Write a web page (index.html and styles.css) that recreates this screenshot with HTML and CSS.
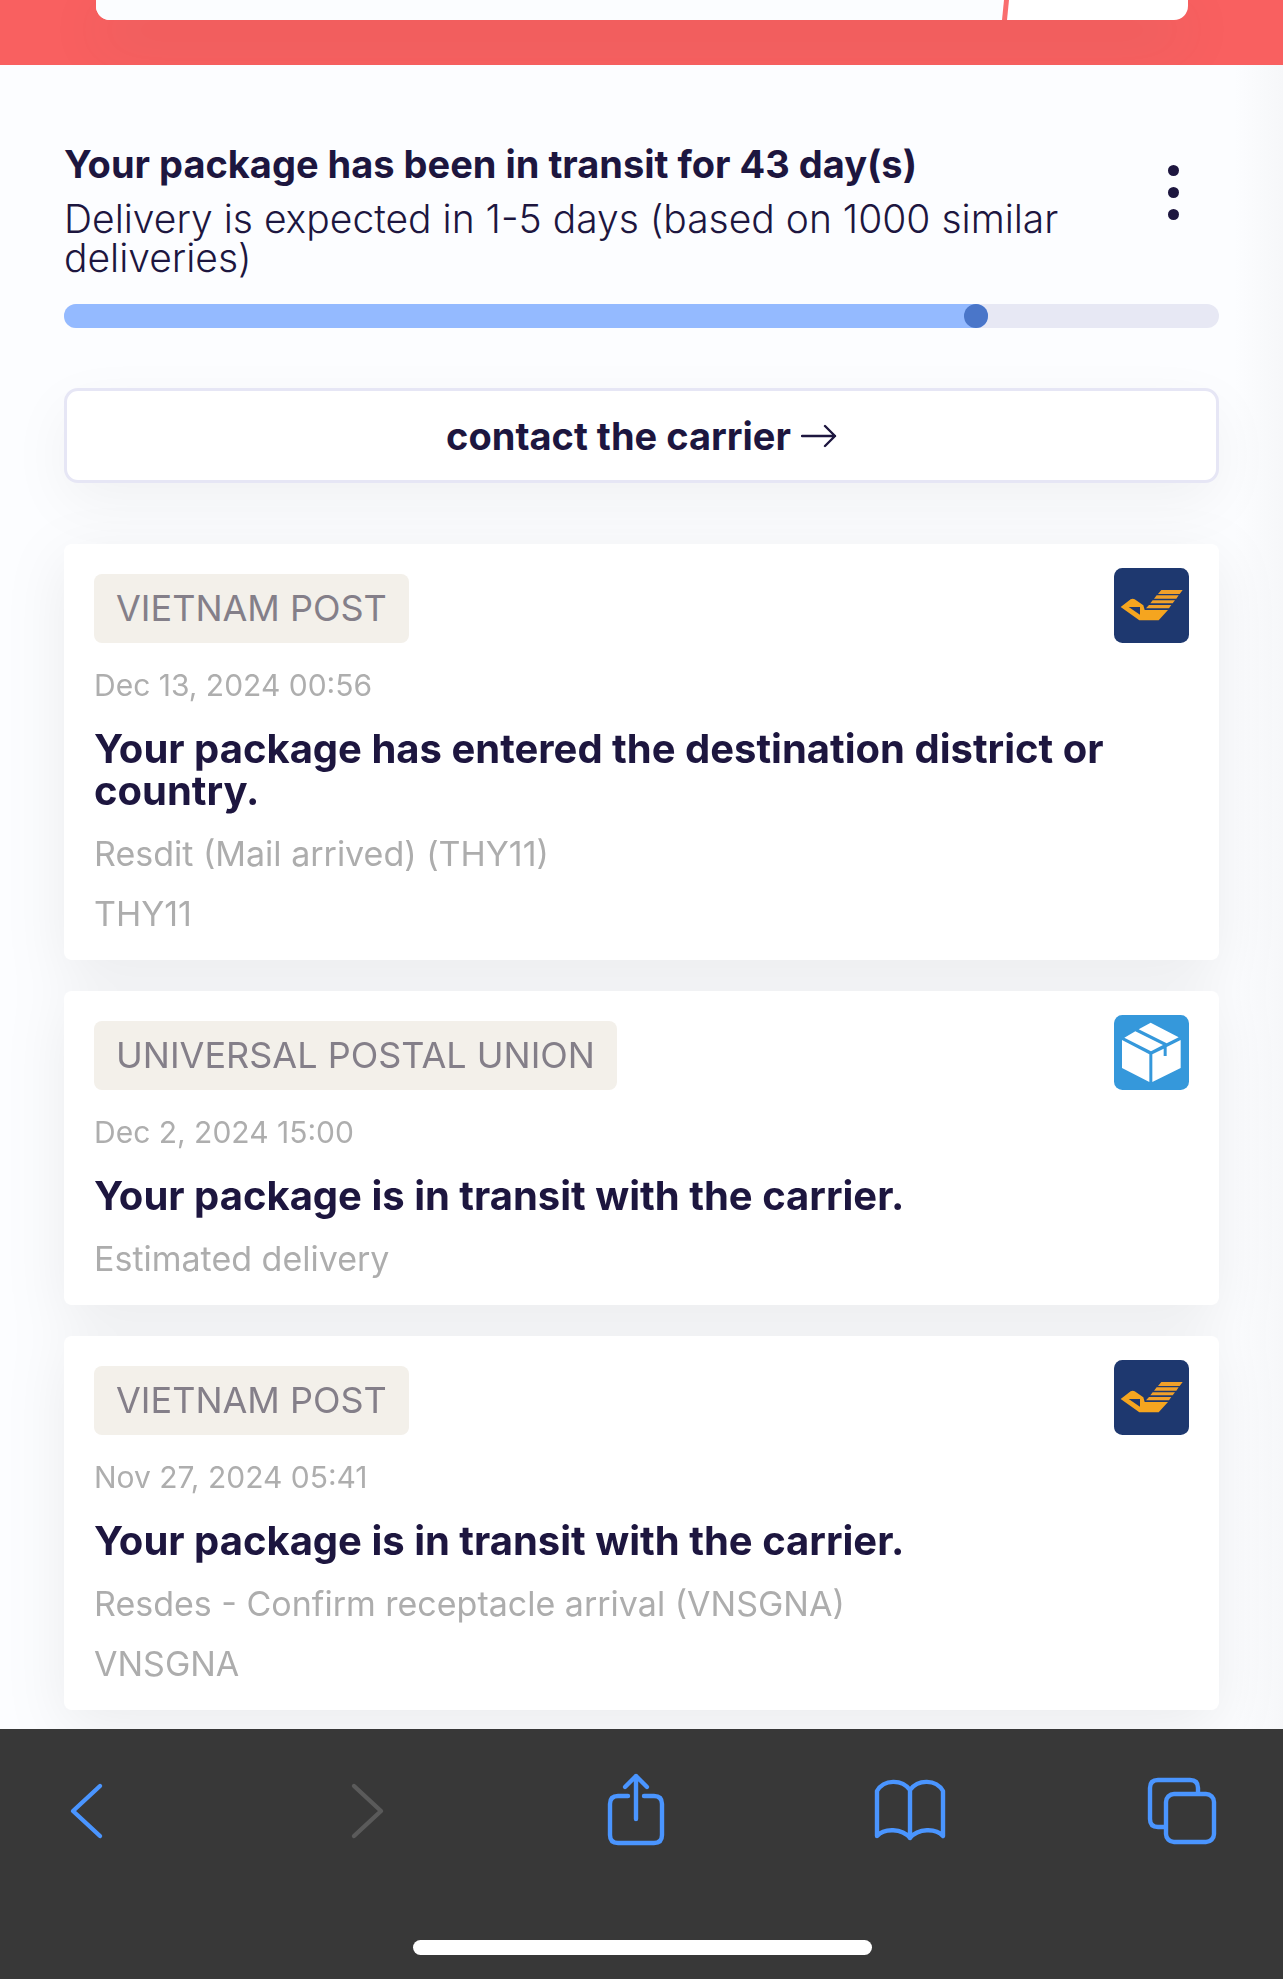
FILE: index.html
```html
<!DOCTYPE html>
<html lang="en">
<head>
<meta charset="utf-8">
<meta name="viewport" content="width=device-width, initial-scale=1">
<title>Package tracking</title>
<link rel="stylesheet" href="styles.css">
</head>
<body>
<svg class="defs" width="0" height="0" aria-hidden="true">
  <symbol id="logo-vnpost" viewBox="74 84 225 225">
    <rect x="74" y="84" width="225" height="225" rx="25" fill="#1e386f"/>
    <path fill="#f5a51f" fill-rule="evenodd" d="M94 201 124 178Q130 174 136 178L162 196 166 210H236L208 241H150ZM118 201 152 224V201Z"/>
    <path fill="#f0a02a" d="M216 150H280L271 162H206ZM202 166H268L261 176H194ZM190 181H257L250 190H183ZM179 195H246L239 205H170Z"/>
  </symbol>
  <symbol id="logo-box" viewBox="74 75 225 225">
    <rect x="74" y="75" width="225" height="225" rx="25" fill="#3598db"/>
    <path fill="#fff" d="M105 143 138 124 221 165 185 184ZM148 118 184 98 268 142 232 160ZM98 150 180 193V276L98 234ZM189 193 223 176V198H232V171L274 150V234L189 276Z"/>
  </symbol>
</svg>

<header class="topbar">
  <div class="topbar-card">
    <div class="topbar-field"></div>
    <svg class="topbar-slash" viewBox="0 0 7 20" aria-hidden="true"><path d="M2 0H7L5 20H0Z" fill="#f96e6e"/></svg>
    <div class="topbar-action"></div>
  </div>
</header>

<main class="content">
  <section class="summary">
    <div class="summary-text">
      <h1 class="summary-title">Your package has been in transit for 43 day(s)</h1>
      <p class="summary-note">Delivery is expected in 1-5 days (based on 1000 similar deliveries)</p>
    </div>
    <button class="menu" type="button" aria-label="More options"><span></span><span></span><span></span></button>
  </section>

  <div class="progress" role="progressbar" aria-label="Delivery progress" aria-valuenow="80" aria-valuemin="0" aria-valuemax="100">
    <div class="progress-fill" style="width:80%"><span class="progress-thumb"></span></div>
  </div>

  <button class="contact" type="button">contact the carrier
    <svg width="36" height="24" viewBox="0 0 36 24" aria-hidden="true"><path d="M1 12H34M24 2 34 12 24 22" fill="none" stroke="currentColor" stroke-width="2.4" stroke-linecap="round" stroke-linejoin="round"/></svg>
  </button>

  <div class="events">
    <article class="event">
      <div class="event-head">
        <span class="badge">VIETNAM POST</span>
        <svg class="event-logo" aria-hidden="true"><use href="#logo-vnpost"/></svg>
      </div>
      <time class="event-date">Dec 13, 2024 00:56</time>
      <h2 class="event-title">Your package has entered the destination district or country.</h2>
      <p class="event-line">Resdit (Mail arrived) (THY11)</p>
      <p class="event-line">THY11</p>
    </article>

    <article class="event">
      <div class="event-head">
        <span class="badge">UNIVERSAL POSTAL UNION</span>
        <svg class="event-logo" aria-hidden="true"><use href="#logo-box"/></svg>
      </div>
      <time class="event-date">Dec 2, 2024 15:00</time>
      <h2 class="event-title">Your package is in transit with the carrier.</h2>
      <p class="event-line">Estimated delivery</p>
    </article>

    <article class="event">
      <div class="event-head">
        <span class="badge">VIETNAM POST</span>
        <svg class="event-logo" aria-hidden="true"><use href="#logo-vnpost"/></svg>
      </div>
      <time class="event-date">Nov 27, 2024 05:41</time>
      <h2 class="event-title">Your package is in transit with the carrier.</h2>
      <p class="event-line">Resdes - Confirm receptacle arrival (VNSGNA)</p>
      <p class="event-line">VNSGNA</p>
    </article>
  </div>
</main>

<nav class="toolbar" aria-label="Browser">
  <div class="toolbar-row">
    <button type="button" aria-label="Back"><svg viewBox="0 0 80 80"><path d="M54 15 27 40 54 65"/></svg></button>
    <button type="button" aria-label="Forward" disabled><svg viewBox="0 0 80 80"><path d="M34 15 61 40 34 65"/></svg></button>
    <button type="button" aria-label="Share"><svg viewBox="0 0 80 80"><path d="M42 48V5M31 16 42 5 53 16M34 25H24Q16 25 16 33V64Q16 72 24 72H60Q68 72 68 64V33Q68 25 60 25H50"/></svg></button>
    <button type="button" aria-label="Bookmarks"><svg viewBox="0 0 80 80"><path d="M43 67V19C35 8 17 8 10 20V65C17 57 35 57 43 67C51 57 69 57 76 65V20C69 8 51 8 43 19"/></svg></button>
    <button type="button" aria-label="Tabs"><svg viewBox="0 0 80 80"><path d="M57 22V17Q57 9 49 9H17Q9 9 9 17V48Q9 56 17 56H24"/><rect x="25" y="23" width="48" height="48" rx="8"/></svg></button>
  </div>
  <div class="home-indicator"></div>
</nav>
</body>
</html>
```
FILE: styles.css
```css
* { box-sizing: border-box; }

body {
  margin: 0;
  min-height: 100vh;
  display: flex;
  flex-direction: column;
  background: linear-gradient(to left, #f6f7f9, #fcfdff 48px);
  color: #1d163f;
  font-family: Inter, "Liberation Sans", sans-serif;
}

h1, h2, p { margin: 0; }

button {
  border: 0;
  padding: 0;
  background: none;
  color: inherit;
  font: inherit;
}

.defs { position: absolute; }

.topbar {
  padding: 0 95px 45px 96px;
  background: #f96060;
  overflow: hidden;
}

.topbar-card {
  display: flex;
  height: 20px;
  background: #fff;
  border-radius: 0 0 14px 14px;
  box-shadow: 0 20px 60px rgba(60, 80, 80, 0.14);
}

.topbar-field {
  flex: 1;
  background: #fbfdff;
  border-bottom-left-radius: 14px;
}

.topbar-slash { width: 7px; height: 20px; }

.topbar-action { width: 179px; }

.content {
  flex: 1;
  padding: 78px 64px 18px;
}

.summary {
  display: flex;
  justify-content: space-between;
  gap: 40px;
}

.summary-text { flex: 1; }

.summary-title {
  font-size: 38px;
  line-height: 42px;
  font-weight: 700;
}

.summary-note {
  margin-top: 14px;
  font-size: 39px;
  line-height: 39px;
  font-weight: 300;
}

.menu {
  display: flex;
  flex-direction: column;
  align-items: center;
  gap: 11px;
  width: 48px;
  height: 100px;
  padding-top: 22px;
  margin-right: 22px;
}

.menu span {
  width: 11px;
  height: 11px;
  border-radius: 50%;
  background: #1d163f;
}

.progress {
  height: 24px;
  margin-top: 27px;
  border-radius: 12px;
  background: #e7e8f4;
}

.progress-fill {
  display: flex;
  justify-content: flex-end;
  height: 24px;
  border-radius: 12px;
  background: #94baff;
}

.progress-thumb {
  width: 24px;
  height: 24px;
  border-radius: 50%;
  background: #4a76c9;
}

.contact {
  display: flex;
  align-items: center;
  justify-content: center;
  gap: 10px;
  width: 100%;
  height: 95px;
  margin-top: 60px;
  border: 3px solid #e6e6f5;
  border-radius: 14px;
  background: #fff;
  box-shadow: 0 20px 60px rgba(0, 0, 0, 0.05);
  font-size: 38px;
  font-weight: 700;
}

.events {
  display: flex;
  flex-direction: column;
  gap: 31px;
  margin-top: 61px;
  filter: drop-shadow(0 16px 30px rgba(0, 0, 0, 0.07));
}

.event {
  display: flex;
  flex-direction: column;
  gap: 24px;
  padding: 30px 30px 28px;
  border-radius: 8px;
  background: #fff;
}

.event-head {
  display: flex;
  align-items: flex-end;
  justify-content: space-between;
  height: 69px;
}

.badge {
  padding: 0 22px;
  border-radius: 8px;
  background: #f3f0ea;
  color: #847f89;
  font-size: 36px;
  line-height: 69px;
}

.event-logo {
  flex: none;
  width: 75px;
  height: 75px;
}

.event-date {
  color: #aeaeae;
  font-size: 30px;
  line-height: 37px;
}

.event-title {
  font-size: 40px;
  line-height: 42px;
  font-weight: 700;
}

.event-line {
  color: #adadad;
  font-size: 34px;
  line-height: 36px;
}

.toolbar {
  position: sticky;
  bottom: 0;
  display: flex;
  flex-direction: column;
  align-items: center;
  justify-content: space-between;
  height: 250px;
  padding: 42px 62px 24px 46px;
  background: #383838;
}

.toolbar-row {
  display: flex;
  justify-content: space-between;
  width: 100%;
}

.toolbar button {
  width: 80px;
  height: 80px;
  color: #4a95ff;
}

.toolbar button:disabled { color: #5a5a5a; }

.toolbar svg {
  display: block;
  fill: none;
  stroke: currentColor;
  stroke-width: 4.4;
  stroke-linecap: round;
  stroke-linejoin: round;
}

.home-indicator {
  width: 459px;
  height: 15px;
  margin-left: 18px;
  border-radius: 8px;
  background: #fff;
}
```
